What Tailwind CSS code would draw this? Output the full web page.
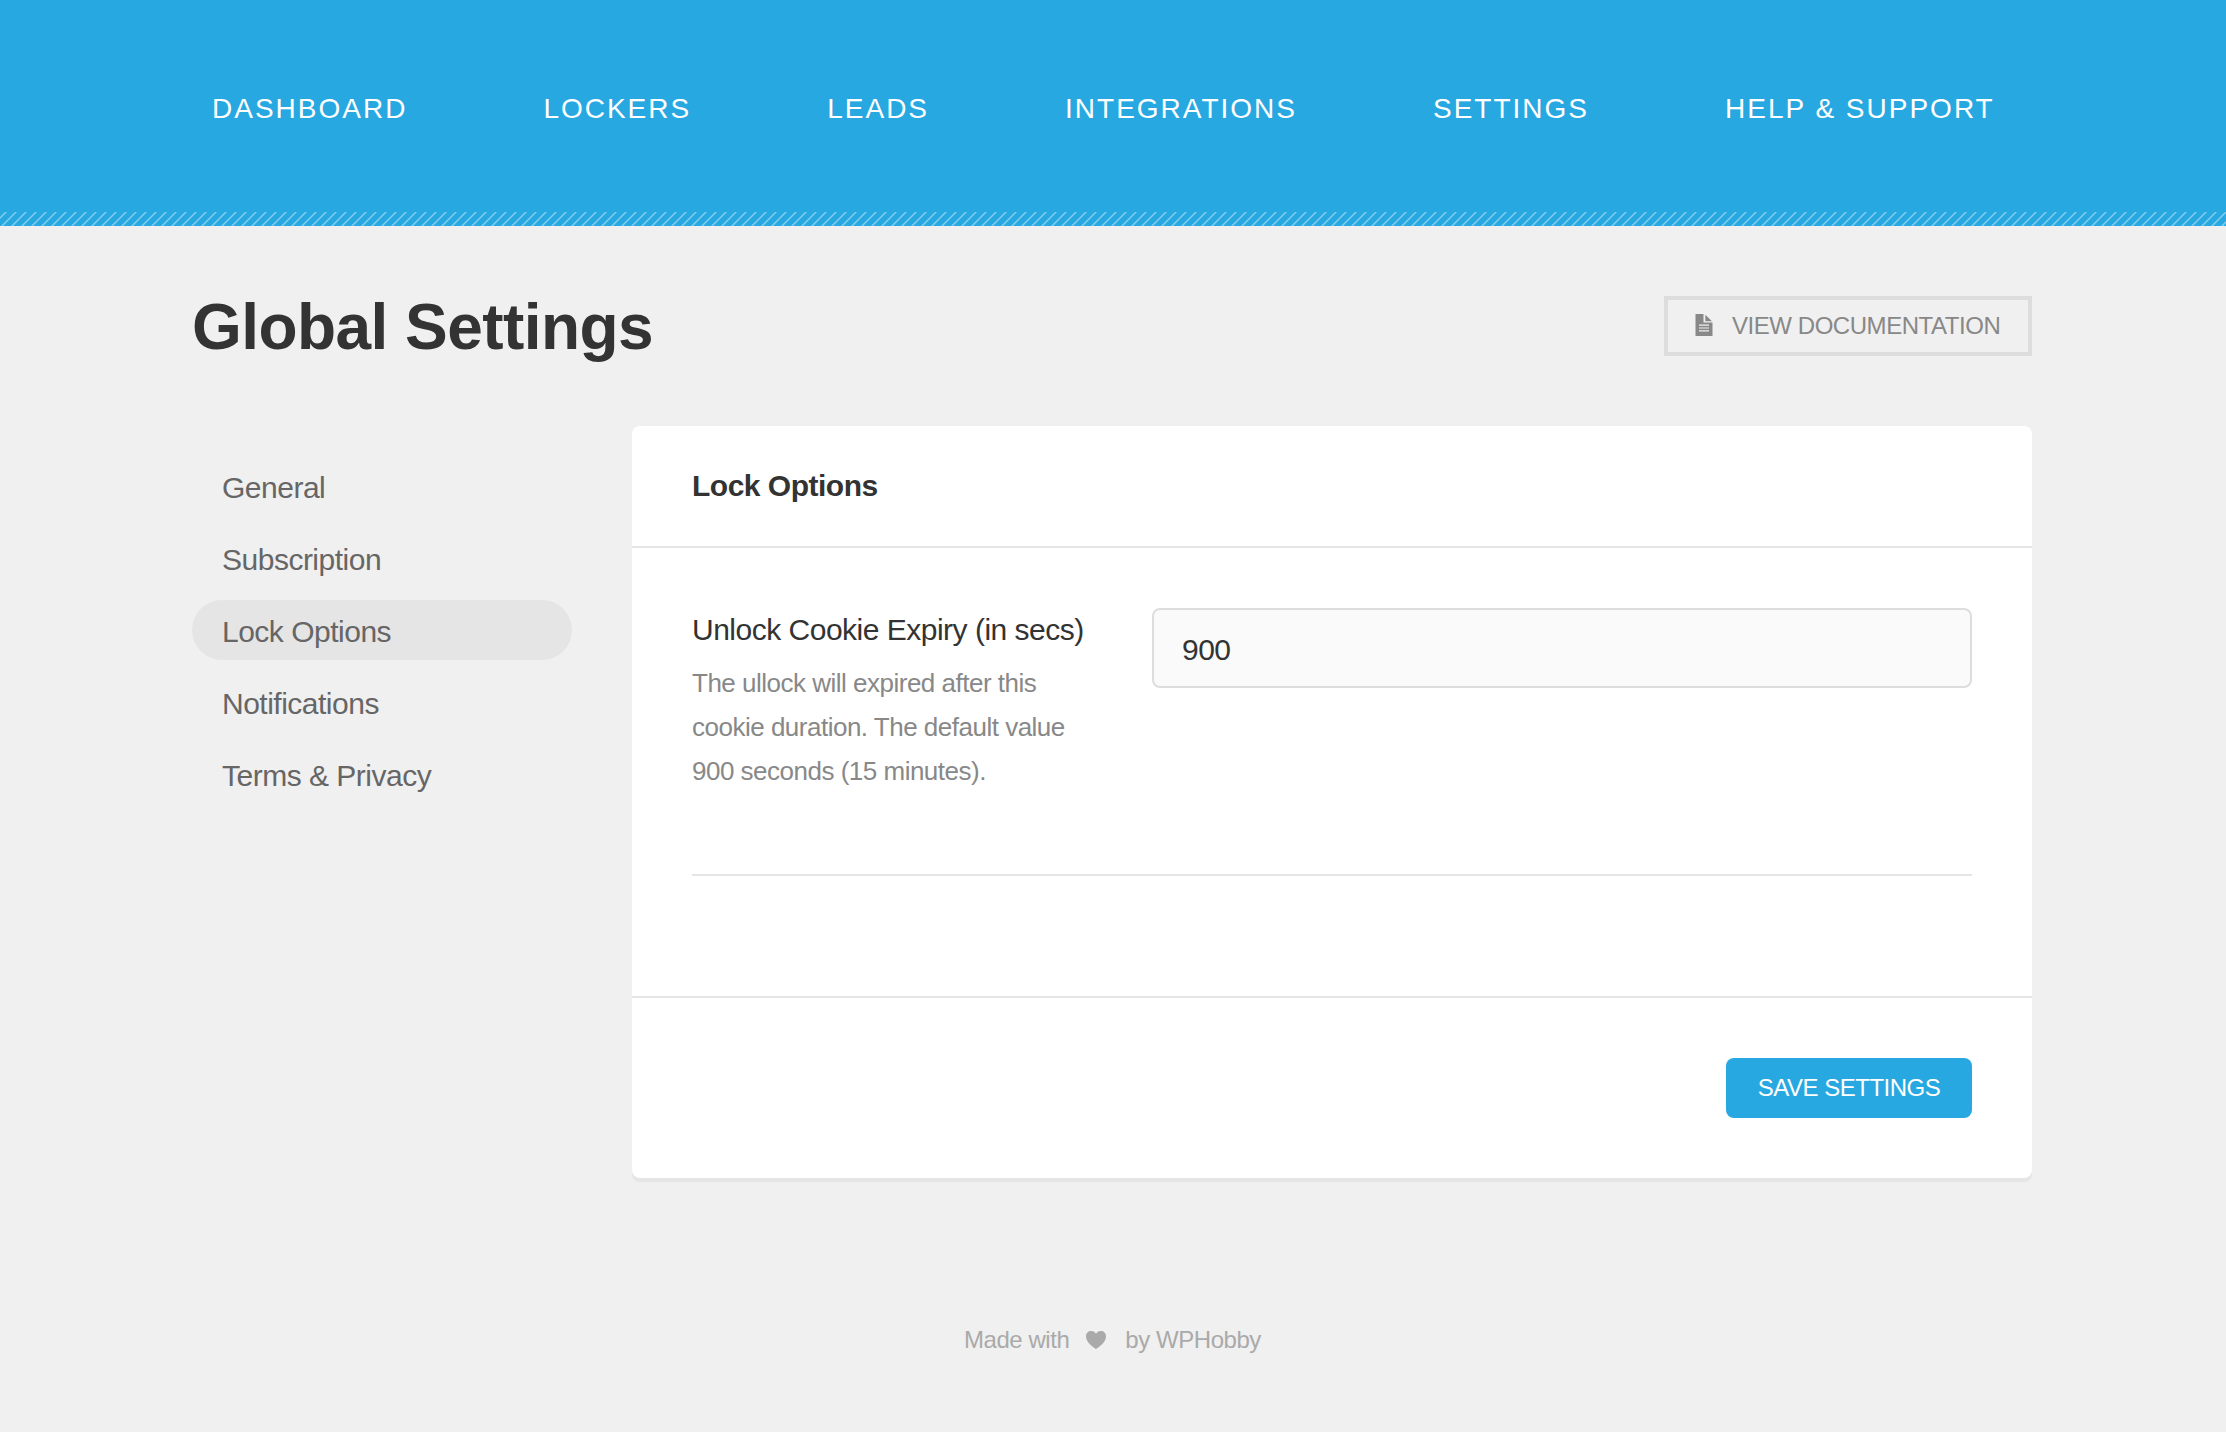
<!DOCTYPE html>
<html lang="en">
<head>
<meta charset="utf-8">
<title>Global Settings</title>
<script src="https://cdn.jsdelivr.net/npm/@tailwindcss/browser@4"></script>
</head>
<body class="bg-[#f0f0f0] font-['Liberation_Sans',Arial,sans-serif] tracking-[-0.5px] text-[#333] h-[1432px] overflow-hidden">
<header class="h-[226px] bg-[#27a8e1] flex flex-col justify-between">
  <nav class="h-[217px] pl-[212px] flex items-center gap-[136px] text-[28px] leading-none tracking-[2px] text-white whitespace-nowrap">
    <a>DASHBOARD</a><a>LOCKERS</a><a>LEADS</a><a>INTEGRATIONS</a><a>SETTINGS</a><a>HELP &amp; SUPPORT</a>
  </nav>
  <svg class="w-full h-[14px] -mt-[5px] shrink-0 block" aria-hidden="true">
    <defs><pattern id="stripes" width="10" height="14" patternUnits="userSpaceOnUse">
      <path d="M-9 15L7 -1M1 15L17 -1M-19 15L-3 -1" stroke="#fff" stroke-opacity=".42" stroke-width="1.5"/>
    </pattern></defs>
    <rect width="100%" height="14" fill="url(#stripes)"/>
  </svg>
</header>
<main class="w-[1840px] ml-[192px] pt-[70px]">
  <div class="h-[60px] flex items-center justify-between">
    <h1 class="text-[64px] leading-none tracking-[-0.55px] font-bold pt-[2px]">Global Settings</h1>
    <a class="w-[368px] h-[60px] border-4 border-[#ddd] pl-[27px] flex items-center text-[24px] leading-none tracking-[-0.45px] text-[#888] whitespace-nowrap">
      <svg class="w-[18px] h-[22px] mr-[19px] -mt-[3px] shrink-0" viewBox="0 0 18 22" fill="#888"><path fill-rule="evenodd" d="M.5 0H8.500V8.500H17.500V22H.5ZM4 10.500V11.700H14V10.500ZM4 13.500V14.600H14V13.500ZM4 16.300V17.400H14V16.300Z"/><path d="M10.300 .8L17 7.200H10.300Z"/></svg>
      VIEW DOCUMENTATION</a>
  </div>
  <div class="flex mt-[70px]">
    <aside class="w-[380px] mr-[60px] pt-[30px] flex flex-col gap-3 text-[30px] leading-none text-[#666]">
      <a class="h-[60px] px-[30px] pt-1 flex items-center">General</a>
      <a class="h-[60px] px-[30px] pt-1 flex items-center">Subscription</a>
      <a class="h-[60px] px-[30px] pt-1 flex items-center rounded-full bg-[#e5e5e5]">Lock Options</a>
      <a class="h-[60px] px-[30px] pt-1 flex items-center">Notifications</a>
      <a class="h-[60px] px-[30px] pt-1 flex items-center">Terms &amp; Privacy</a>
    </aside>
    <section class="w-[1400px] bg-white rounded-lg shadow-[0_4px_0_#e5e5e5]">
      <h2 class="h-[122px] border-b-2 border-[#e5e5e5] px-[60px] flex items-center text-[30px] leading-none font-bold">Lock Options</h2>
      <div class="px-[60px] pt-[60px] h-[448px]">
        <div class="flex h-[268px] border-b-2 border-[#e5e5e5]">
          <div class="w-[460px]">
            <label class="block text-[30px] leading-[44px]">Unlock Cookie Expiry (in secs)</label>
            <p class="mt-[9px] w-[400px] text-[26px] leading-[44px] text-[#888]">The ullock will expired after this<br>cookie duration. The default value<br>900 seconds (15 minutes).</p>
          </div>
          <input type="text" value="900" class="w-[820px] h-[80px] border-2 border-[#ddd] rounded-lg bg-[#fafafa] px-[28px] pt-1 text-[30px] tracking-[-0.5px] outline-none">
        </div>
      </div>
      <div class="h-[182px] border-t-2 border-[#e5e5e5] pt-[60px] px-[60px] flex justify-end items-start">
        <button class="w-[246px] h-[60px] rounded-lg bg-[#27a8e1] text-white text-[24px] leading-none tracking-[-0.5px]">SAVE SETTINGS</button>
      </div>
    </section>
  </div>
</main>
<footer class="mt-[142px] h-[40px] pl-[964px] flex items-center text-[24px] leading-none tracking-[-0.45px] text-[#aaa] whitespace-nowrap">
  Made with
  <svg class="w-[20px] h-[18px] ml-[17px] mr-[19px]" viewBox="0 0 20 18" fill="#aaa"><path d="M10 18C8.500 17 0 11.500 0 5.400C0 2 2.300 0 5.200 0C7.500 0 9.200 1.200 10 2.700C10.800 1.200 12.500 0 14.800 0C17.700 0 20 2 20 5.400C20 11.500 11.500 17 10 18Z"/></svg>
  by WPHobby
</footer>
</body>
</html>
